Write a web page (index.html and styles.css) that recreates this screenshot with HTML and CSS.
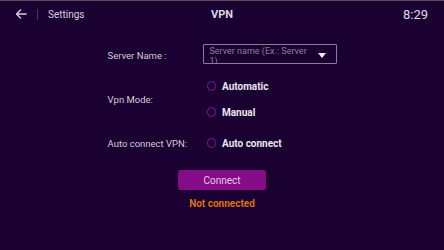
FILE: index.html
```html
<!DOCTYPE html>
<html>
<head>
<meta charset="utf-8">
<link rel="stylesheet" href="styles.css">
</head>
<body>
<div class="screen">
  <header class="topbar">
    <div class="left">
      <svg class="back" width="12" height="10" viewBox="0 0 12 10"><path d="M11 5H1.5M5.5 1L1.5 5l4 4" fill="none" stroke="#d8d0e0" stroke-width="1.4" stroke-linecap="round" stroke-linejoin="round"/></svg>
      <span class="divider"></span>
      <span class="crumb">Settings</span>
    </div>
    <div class="title">VPN</div>
    <div class="clock">8:29</div>
  </header>
  <main class="form">
    <div class="row server">
      <div class="label">Server Name :</div>
      <div class="select">
        <span class="placeholder">Server name (Ex.: Server 1)</span>
        <svg class="caret" width="8" height="5" viewBox="0 0 8 5"><path d="M0 0h8L4 5z" fill="#f0ecf4"/></svg>
      </div>
    </div>
    <div class="row mode">
      <div class="label">Vpn Mode:</div>
      <div class="options">
        <div class="opt"><span class="radio"></span><span>Automatic</span></div>
        <div class="opt"><span class="radio"></span><span>Manual</span></div>
      </div>
    </div>
    <div class="row auto">
      <div class="label">Auto connect VPN:</div>
      <div class="opt"><span class="radio"></span><span>Auto connect</span></div>
    </div>
  </main>
  <div class="actions">
    <button class="connect">Connect</button>
    <div class="status">Not connected</div>
  </div>
</div>
</body>
</html>
```
FILE: styles.css
```css
html, body {
  margin: 0;
  padding: 0;
}
body {
  width: 444px;
  height: 250px;
  background: #1b0131;
  font-family: Roboto, "Noto Sans", sans-serif;
  color: #d6cfdc;
  overflow: hidden;
}
.screen {
  border-top: 1px solid #5a5060;
  height: 249px;
  display: flex;
  flex-direction: column;
}
.topbar {
  height: 26px;
  display: grid;
  grid-template-columns: 1fr auto 1fr;
  align-items: center;
}
.left {
  display: flex;
  align-items: center;
  padding-left: 15px;
}
.back {
  display: block;
}
.divider {
  width: 1px;
  height: 11px;
  background: #4a3c58;
  margin: 0 10px 0 10px;
}
.crumb {
  font-size: 10px;
  color: #d8d0e0;
}
.title {
  font-size: 11px;
  font-weight: 700;
  color: #dcd6e4;
}
.clock {
  justify-self: end;
  padding-right: 16px;
  font-size: 13px;
  color: #e0dae6;
}
.form {
  width: 229px;
  margin: 17px auto 0;
  display: flex;
  flex-direction: column;
}
.row {
  display: grid;
  grid-template-columns: 95px 134px;
  align-items: center;
}
.label {
  font-size: 9.5px;
  color: #d2cad8;
}
.server .label {
  padding-top: 2px;
}
.select {
  height: 18px;
  border: 1px solid #8a7e96;
  border-radius: 1px;
  display: flex;
  align-items: flex-start;
  padding: 0 10px 0 6px;
  overflow: hidden;
}
.placeholder {
  flex: 1;
  font-size: 9px;
  line-height: 10px;
  color: #8a8094;
  padding-top: 1px;
  padding-right: 10px;
}
.caret {
  margin-top: 8px;
}
.mode {
  margin-top: 15px;
}
.options {
  display: flex;
  flex-direction: column;
  gap: 12px;
}
.opt {
  display: flex;
  align-items: center;
  height: 14px;
  font-size: 10px;
  font-weight: 700;
  color: #ece6f0;
}
.radio {
  width: 7.5px;
  height: 7.5px;
  border: 1.5px solid #7a1aa4;
  border-radius: 50%;
  margin-left: 4px;
  margin-right: 6px;
}
.auto {
  margin-top: 17px;
}
.actions {
  display: flex;
  flex-direction: column;
  align-items: center;
  margin-top: 20px;
}
.connect {
  width: 88px;
  height: 20px;
  border: none;
  border-radius: 3px;
  background: #860b86;
  color: #e8cde8;
  font-family: Roboto, "Noto Sans", sans-serif;
  font-size: 10px;
  padding: 0;
}
.status {
  margin-top: 8px;
  font-size: 10px;
  font-weight: 700;
  color: #d9700f;
}
```
